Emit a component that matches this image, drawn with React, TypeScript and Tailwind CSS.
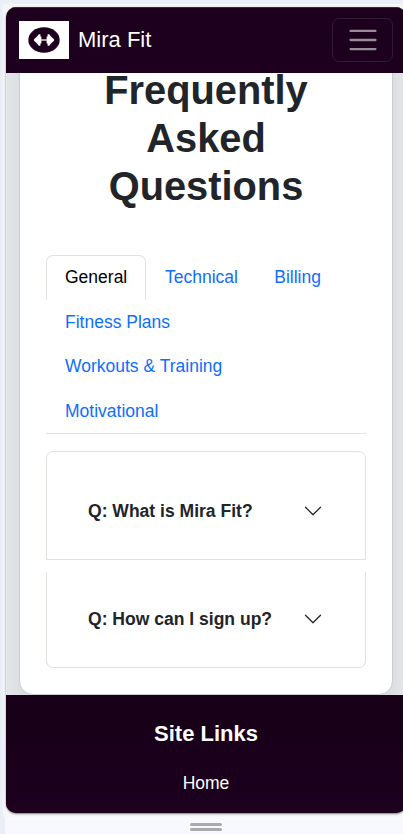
const tabs = ['General', 'Technical', 'Billing', 'Fitness Plans', 'Workouts & Training', 'Motivational'];

function Logo() {
  return (
    <div className="flex h-[38px] w-[50px] items-center justify-center bg-white">
      <svg width="32" height="26" viewBox="0 0 32 26" className="block">
        <ellipse cx="16" cy="13" rx="15.7" ry="12.7" fill="#1c001e" />
        <g fill="#fff">
          <path d="M6 12.2 L8 10.6 L9.4 9 L10.8 7.2 H12.4 V9.6 H13.4 V16.4 H12.4 V18.8 H10.8 L9.4 17 L8 15.4 L6 13.8 Z" />
          <path d="M26 12.2 L24 10.6 L22.6 9 L21.2 7.2 H19.6 V9.6 H18.6 V16.4 H19.6 V18.8 H21.2 L22.6 17 L24 15.4 L26 13.8 Z" />
          <rect x="13.2" y="12.2" width="5.6" height="1.6" opacity="0.8" />
        </g>
      </svg>
    </div>
  );
}

function Navbar() {
  return (
    <nav className="relative z-10 flex h-[66px] shrink-0 items-center justify-between border-t border-[#3d2840] bg-[#1c001e] px-[13px] pb-[2px]">
      <a className="flex items-center gap-[9px] text-[22px] text-white">
        <Logo />
        <span>Mira Fit</span>
      </a>
      <button className="flex h-[44px] w-[61px] items-center justify-center rounded-[7px] border border-[#331b35]">
        <svg width="34" height="34" viewBox="0 0 30 30" className="block">
          <path d="M4 7h22M4 15h22M4 23h22" stroke="rgba(255,255,255,.55)" strokeWidth="2" strokeLinecap="round" />
        </svg>
      </button>
    </nav>
  );
}

function Question({ text, className }: { text: string; className: string }) {
  return (
    <button className={`flex w-full items-center justify-between border-[#dee2e6] pr-[42px] pl-[41px] ${className}`}>
      <span className="text-[17.55px] leading-[26px] font-bold text-[#212529]">{text}</span>
      <svg width="20" height="20" viewBox="0 0 16 16" className="mt-[1px] block">
        <path d="m2 5 6 6 6-6" fill="none" stroke="#212529" strokeLinecap="round" strokeLinejoin="round" />
      </svg>
    </button>
  );
}

export default function App() {
  return (
    <div className="h-[834px] w-[403px] overflow-hidden bg-[#e9eef7] pt-[4px] pl-[3px] font-['Liberation_Sans',Arial,sans-serif]">
      <div className="h-[813px] w-[410px] bg-[#f5f6f5] pt-[3px] pl-[3px]">
        <div className="flex h-[806px] w-[400px] flex-col overflow-hidden rounded-[10px] bg-[#e3e7e9] shadow-[0_1px_2px_rgba(0,0,0,0.5)]">
          <Navbar />
          <main className="-mt-[20px] px-[13px]">
            <section className="h-[642px] w-[374px] rounded-b-[14px] border border-[#cbcecf] bg-white px-[26px] pt-[12px] shadow-[0_8px_18px_rgba(0,0,0,0.07)]">
              <h1 className="text-center text-[39.8px] leading-[48px] font-bold text-[#212529]">
                Frequently<br />Asked<br />Questions
              </h1>
              <ul className="mt-[45px] flex h-[179px] flex-wrap content-start border-b border-[#dee2e6]">
                {tabs.map((tab, i) => (
                  <li
                    key={tab}
                    className={
                      'flex h-[44.5px] items-center rounded-t-[7px] border border-b-0 pb-[1px] pl-[18px] text-[17.5px] ' +
                      (i === 0 ? 'border-[#dee2e6] pr-[17.7px] text-black' : 'border-transparent pr-[16.3px] text-[#0d6efd]')
                    }
                  >
                    {tab}
                  </li>
                ))}
              </ul>
              <div className="mt-[17px] flex flex-col gap-[12px]">
                <Question text="Q: What is Mira Fit?" className="h-[109px] rounded-t-[7px] border pt-[10px]" />
                <Question text="Q: How can I sign up?" className="h-[96px] rounded-b-[7px] border border-t-0 pb-[2px]" />
              </div>
            </section>
          </main>
          <footer className="relative flex flex-1 flex-col items-center bg-[#1c001e] bg-gradient-to-b from-[#180018] to-[#1c001e] pt-[25px] text-white">
            <h2 className="text-[22px] leading-[28px] font-bold">Site Links</h2>
            <a className="mt-[22px] text-[17.5px] leading-[27px]">Home</a>
          </footer>
        </div>
      </div>
      <div className="ml-[2px] flex h-[17px] flex-col items-center gap-[2px] bg-[#f8f9ff] pt-[6px] pl-[4px]">
        <div className="h-[3px] w-[32px] rounded-full bg-[#aaaaac]" />
        <div className="h-[3px] w-[32px] rounded-full bg-[#aaaaac]" />
      </div>
    </div>
  );
}
